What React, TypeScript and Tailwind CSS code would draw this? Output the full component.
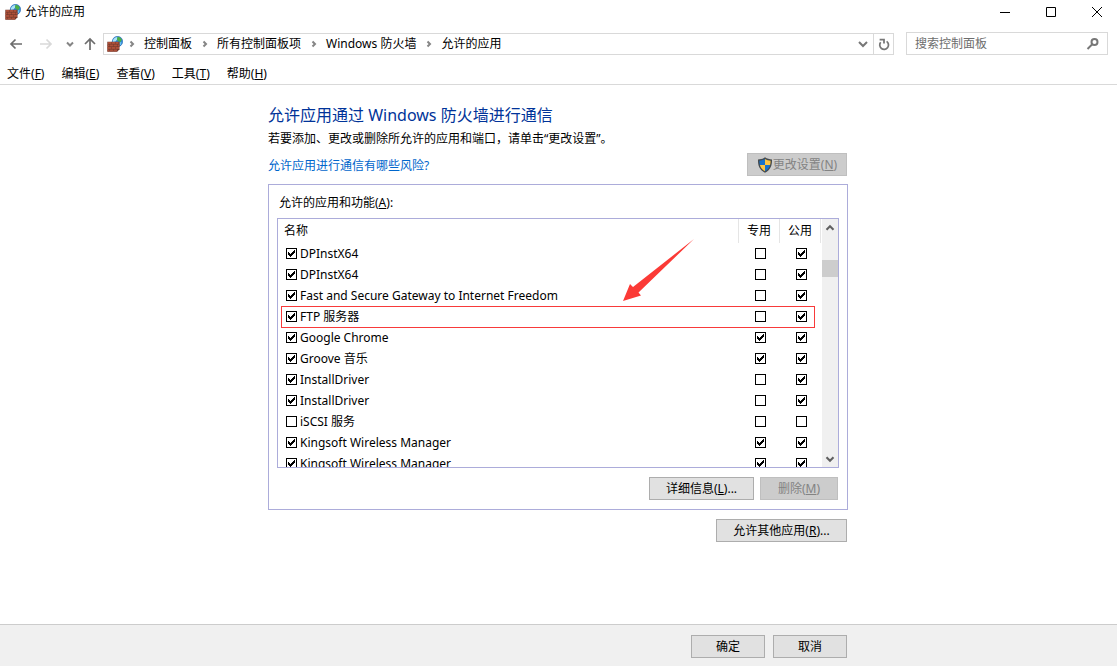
import React, { useState } from "react";

const firewallBricks = [
  [1, 6, 3], [4.5, 6, 3.5], [8.5, 6, 3],
  [0.5, 8.5, 2], [3, 8.5, 3.5], [7, 8.5, 3.500], [11, 8.5, 1.5],
  [0.5, 11, 3.500], [4.5, 11, 3.5], [8.5, 11, 3.500],
  [0.5, 13.5, 2], [3, 13.5, 3.5], [7, 13.5, 3],
];

function FirewallIcon() {
  return (
    <svg viewBox="0 0 16 16" className="size-4 shrink-0" aria-hidden="true">
      <circle cx="10.500" cy="5.500" r="5.200" fill="#2f86d6" stroke="#1f5fa8" strokeWidth="0.500" />
      <path d="M6 4C7 1.800 8.600 .9 10.500 .9L10 3.500 8.500 5.500 6 6Z" fill="#a9e3f7" />
      <path d="M10.500 .8c2 .1 3.600 1.300 4.300 3L13.500 6l-2-.5L10 3.800Z" fill="#4cb045" />
      <path d="M12 6.500l2.500-.5-.5 2.500-1.500 1.200Z" fill="#6fc3ef" />
      <path d="M.3 5.800h12.300l-.1 7.400-2.300 2.500H.3Z" fill="#71382c" />
      {firewallBricks.map(([x, y, w]) => (
        <rect key={`${x}-${y}`} x={x} y={y} width={w} height="1.900" fill="#ad5039" />
      ))}
    </svg>
  );
}

function ShieldIcon() {
  return (
    <svg viewBox="0 0 16 16" className="size-4 shrink-0" aria-hidden="true">
      <path d="M8 .3C6 1.800 3.500 2.400 1 2.400.8 8.500 2.300 12.500 8 15.800c5.700-3.300 7.200-7.300 7-13.400C12.500 2.400 10 1.800 8 .3Z" fill="#454a4e" />
      <path d="M8 2C6.300 3 4.300 3.600 2.400 3.700c0 1.600.1 3 .5 4.300H8Z" fill="#1672cd" />
      <path d="M8 2c1.700 1 3.700 1.600 5.600 1.700 0 1.600-.1 3-.5 4.300H8Z" fill="#fbc545" />
      <path d="M2.900 8c.7 2.700 2.300 4.700 5.100 6.300V8Z" fill="#fbc545" />
      <path d="M13.100 8c-.7 2.700-2.300 4.700-5.100 6.300V8Z" fill="#1672cd" />
    </svg>
  );
}

type GlyphProps = { d: string; className: string; width?: number };

function Glyph({ d, className, width = 2 }: GlyphProps) {
  return (
    <svg viewBox="0 0 16 16" className={`shrink-0 ${className}`} fill="none" stroke="currentColor" strokeWidth={width} aria-hidden="true">
      <path d={d} />
    </svg>
  );
}

const CHEVRON_DOWN = "M4 6l4 4 4-4";

function Tick({ label, initial }: { label: string; initial: boolean }) {
  const [on, setOn] = useState(initial);
  return (
    <span className="relative block size-[11px] shrink-0">
      <input
        type="checkbox"
        aria-label={label}
        checked={on}
        onChange={() => setOn(!on)}
        className="block size-[11px] appearance-none border border-black bg-white"
      />
      {on && (
        <svg viewBox="0 0 11 11" className="pointer-events-none absolute inset-0 size-[11px]" shapeRendering="crispEdges" aria-hidden="true">
          <path d="M2 4h1v1h1v1h1V5h1V4h1V3h1V2h1v3H8v1H7v1H6v1H5v1H4V8H3V7H2Z" />
        </svg>
      )}
    </span>
  );
}

type ButtonProps = { text: string; hot?: string; tail?: string; disabled?: boolean; icon?: React.ReactNode; className: string };

function PushButton({ text, hot, tail = "", disabled = false, icon, className }: ButtonProps) {
  return (
    <button
      type="button"
      disabled={disabled}
      className={`flex h-[23px] items-center justify-center border text-xs whitespace-nowrap ${
        disabled ? "border-[#bfbfbf] bg-[#cccccc] text-[#838383]" : "border-[#adadad] bg-[#e1e1e1] text-black"
      } ${className}`}
    >
      {icon}
      <span>
        {text}
        {hot && <>(<u>{hot}</u>)</>}
        {tail}
      </span>
    </button>
  );
}

const menus = [
  ["文件", "F"],
  ["编辑", "E"],
  ["查看", "V"],
  ["工具", "T"],
  ["帮助", "H"],
];

const crumbs = ["控制面板", "所有控制面板项", "Windows 防火墙", "允许的应用"];

type AppRow = { name: string; allowed: boolean; priv: boolean; pub: boolean; marked?: boolean };

const rows: AppRow[] = [
  { name: "DPInstX64", allowed: true, priv: false, pub: true },
  { name: "DPInstX64", allowed: true, priv: false, pub: true },
  { name: "Fast and Secure Gateway to Internet Freedom", allowed: true, priv: false, pub: true },
  { name: "FTP 服务器", allowed: true, priv: false, pub: true, marked: true },
  { name: "Google Chrome", allowed: true, priv: true, pub: true },
  { name: "Groove 音乐", allowed: true, priv: true, pub: true },
  { name: "InstallDriver", allowed: true, priv: false, pub: true },
  { name: "InstallDriver", allowed: true, priv: false, pub: true },
  { name: "iSCSI 服务", allowed: false, priv: false, pub: false },
  { name: "Kingsoft Wireless Manager", allowed: true, priv: true, pub: true },
  { name: "Kingsoft Wireless Manager", allowed: true, priv: true, pub: true },
];

function TitleBar() {
  return (
    <header className="flex h-6 items-center pr-3 pl-[5px]">
      <FirewallIcon />
      <h1 className="ml-1 flex-1 text-xs">允许的应用</h1>
      <div className="flex gap-[30px]">
        <button type="button" aria-label="最小化"><Glyph d="M3 8.500h10" width={1} className="size-4" /></button>
        <button type="button" aria-label="最大化"><Glyph d="M3.500 3.500h9v9h-9Z" width={1} className="size-4" /></button>
        <button type="button" aria-label="关闭"><Glyph d="M3 3l10 10M13 3L3 13" width={1} className="size-4" /></button>
      </div>
    </header>
  );
}

function AddressRow() {
  return (
    <div className="flex h-10 items-center pr-[9px] pl-2">
      <button type="button" aria-label="后退" className="text-[#6d6d6d]"><Glyph d="M14 8H3M7.500 3.500L3 8l4.500 4.500" width={1.7} className="size-4" /></button>
      <button type="button" aria-label="前进" className="ml-3.5 text-[#d9d9d9]"><Glyph d="M2 8h11M8.500 3.500L13 8l-4.500 4.500" width={1.7} className="size-4" /></button>
      <button type="button" aria-label="最近的位置" className="ml-2 text-[#858585]"><Glyph d="M5 6.500l3 3 3-3" className="size-4" /></button>
      <button type="button" aria-label="上移" className="ml-1 text-[#6d6d6d]"><Glyph d="M8 14V3M3 8l5-5 5 5" width={1.7} className="size-4" /></button>
      <div className="ml-[5px] flex h-[22px] flex-1 items-center border border-[#d9d9d9]">
        <span className="ml-[3px]"><FirewallIcon /></span>
        <nav aria-label="地址" className="flex flex-1 items-center">
          {crumbs.map((crumb) => (
            <React.Fragment key={crumb}>
              <Glyph d="M6.500 5.500l2.500 2.500-2.500 2.500" className="ml-px size-4 text-[#858585]" />
              <a href="#" className="mx-1 text-xs">{crumb}</a>
            </React.Fragment>
          ))}
        </nav>
        <button type="button" aria-label="以前的位置" className="px-0.5 text-[#777777]"><Glyph d={CHEVRON_DOWN} className="size-4" /></button>
        <button type="button" aria-label="刷新" className="flex h-full w-5 items-center justify-center border-l border-[#d9d9d9] text-[#777777]">
          <Glyph d="M4.200 6A5 5 0 1 0 11 5M3 3h5v4.500" className="size-3.5" />
        </button>
      </div>
      <div className="mb-px ml-3 flex h-[23px] w-[202px] items-center border border-[#d9d9d9] pr-1.5 pl-2">
        <input aria-label="搜索控制面板" placeholder="搜索控制面板" className="min-w-0 flex-1 text-xs placeholder:text-[#6d6d6d]" />
        <svg viewBox="0 0 16 16" className="size-4 text-[#777777]" fill="none" stroke="currentColor" strokeWidth="2" aria-hidden="true">
          <circle cx="9.500" cy="6" r="3" />
          <path d="M7.500 8l-5 5" />
        </svg>
      </div>
    </div>
  );
}

function MenuBar() {
  return (
    <nav aria-label="菜单" className="flex h-[21px] items-center gap-[17px] border-b border-[#d9d9d9] pl-[7px]">
      {menus.map(([name, key]) => (
        <button key={key} type="button" className="text-xs">
          {name}(<u>{key}</u>)
        </button>
      ))}
    </nav>
  );
}

function AppList() {
  return (
    <div className="relative flex h-[250px] border border-[#acacda]">
      <div className="min-w-0 flex-1 overflow-hidden">
        <table className="w-full table-fixed border-separate border-spacing-0">
          <thead>
            <tr className="h-6 text-left text-xs">
              <th scope="col" className="border-r border-[#e5e5e5] p-0 pl-1.5 font-normal">名称</th>
              <th scope="col" className="w-[41px] border-r border-[#e5e5e5] p-0 pl-2 font-normal">专用</th>
              <th scope="col" className="w-[41px] border-r border-[#e5e5e5] p-0 pl-2 font-normal">公用</th>
            </tr>
          </thead>
          <tbody>
            {rows.map((row, index) => (
              <tr key={index} className="relative h-[21px]">
                <td className="p-0 pl-2">
                  <div className="flex items-center gap-[3px] text-xs leading-5">
                    <Tick label={row.name} initial={row.allowed} />
                    <span>{row.name}</span>
                  </div>
                  {row.marked && <span className="pointer-events-none absolute -bottom-px top-0 right-1.5 left-[3px] border border-[#f83a3a]" />}
                </td>
                <td className="p-0 pl-4"><Tick label={`${row.name} 专用`} initial={row.priv} /></td>
                <td className="p-0 pl-4"><Tick label={`${row.name} 公用`} initial={row.pub} /></td>
              </tr>
            ))}
          </tbody>
        </table>
      </div>
      <div className="ml-px flex w-4 flex-col items-center bg-[#f0f0f0] text-[#606060]">
        <button type="button" aria-label="向上滚动" className="flex h-[17px] items-center"><Glyph d="M4 10l4-4 4 4" width={2.4} className="size-3.5" /></button>
        <div className="mt-6 mb-auto h-[17px] w-full bg-[#cdcdcd]" />
        <button type="button" aria-label="向下滚动" className="flex h-[17px] items-center"><Glyph d={CHEVRON_DOWN} width={2.4} className="size-3.5" /></button>
      </div>
      <svg viewBox="0 0 71 62" className="pointer-events-none absolute top-5 right-[144px] h-[62px] w-[71px]" aria-hidden="true">
        <path d="M71 0L15.500 53.500 18 56.500 0 62 7 45 10 48Z" fill="#fb3a36" />
      </svg>
    </div>
  );
}

export default function App() {
  return (
    <div className="flex min-h-screen flex-col bg-white font-['Noto_Sans','Noto_Sans_CJK_SC',sans-serif] text-xs text-black">
      <TitleBar />
      <AddressRow />
      <MenuBar />
      <main className="mx-auto w-full max-w-[581px] flex-1 pt-[18px] pr-px">
        <h2 className="text-base leading-6 text-[#003399]">允许应用通过 Windows 防火墙进行通信</h2>
        <p className="leading-6">若要添加、更改或删除所允许的应用和端口，请单击“更改设置”。</p>
        <div className="mt-0.5 flex items-end justify-between pr-px">
          <a href="#" className="leading-5 text-[#0066cc]">允许应用进行通信有哪些风险?</a>
          <PushButton text="更改设置" hot="N" disabled icon={<ShieldIcon />} className="w-[100px]" />
        </div>
        <section className="mt-2 border border-[#acacda] px-2 pt-1.5 pb-[9px]">
          <h3 className="mb-[3px] pl-0.5 leading-6">允许的应用和功能(<u>A</u>):</h3>
          <AppList />
          <div className="mt-[9px] flex justify-end gap-1.5 pr-px">
            <PushButton text="详细信息" hot="L" tail="..." className="w-[105px]" />
            <PushButton text="删除" hot="M" disabled className="w-[78px]" />
          </div>
        </section>
        <div className="mt-[9px] flex justify-end pr-px">
          <PushButton text="允许其他应用" hot="R" tail="..." className="w-[131px]" />
        </div>
      </main>
      <footer className="border-t border-[#cccccc] bg-[#f0f0f0]">
        <div className="mx-auto flex w-full max-w-[581px] justify-end gap-2 pt-2.5 pr-0.5 pb-2">
          <PushButton text="确定" className="w-[74px]" />
          <PushButton text="取消" className="w-[74px]" />
        </div>
      </footer>
    </div>
  );
}
